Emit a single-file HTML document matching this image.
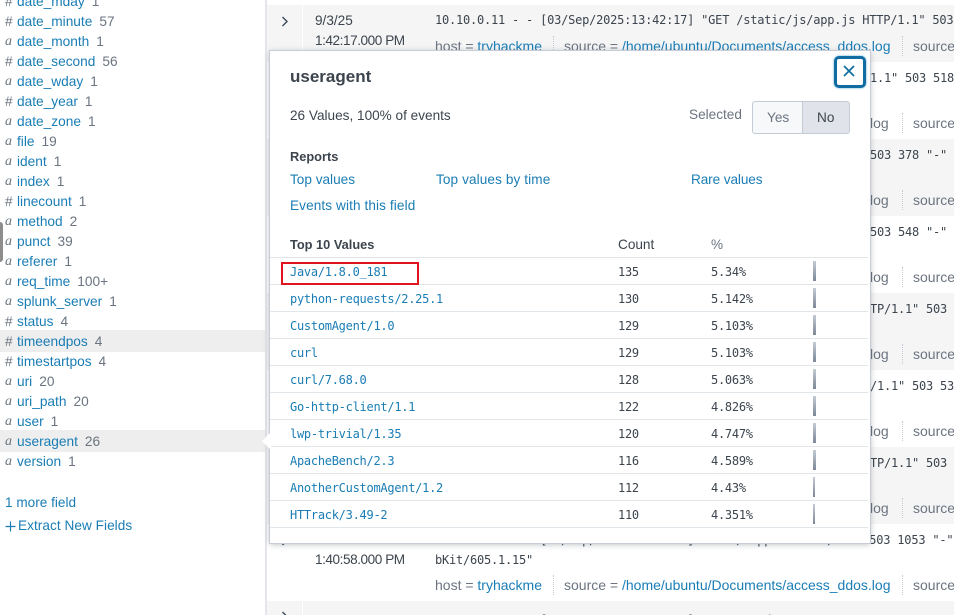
<!DOCTYPE html>
<html><head><meta charset="utf-8"><style>
html,body{margin:0;padding:0;width:954px;height:615px;overflow:hidden;background:#fff;font-family:"Liberation Sans",sans-serif;font-size:13.6px;color:#3c444d}
body{position:relative}
div,span,a{position:absolute;white-space:nowrap}
span.i,a.i,b.i{position:static}
.l{color:#1a7db5}
.c{color:#6b7480}
.f{height:20px;line-height:20px;left:0;width:265px}
.f .t{left:5px;color:#6b7480;width:10px}
.f .a{font-family:"Liberation Serif",serif;font-style:italic;font-size:14px}
.f .n{left:17px;color:#1a7db5;font-size:13.7px}
.f .n i{font-style:normal;color:#6b7480;margin-left:7px}
.st{left:267px;width:687px;background:#f5f5f6}
.m{font-family:"DejaVu Sans Mono","Liberation Mono",monospace;font-size:12px;letter-spacing:-.22px;color:#3c444d;height:20px;line-height:20px}
.s{font-size:14px;height:20px;line-height:20px;color:#6b7480}
.dot{width:0;height:20px;border-left:1px dotted #c3cbd4}
.row{left:0;width:598px;height:1px;background:#e1e6eb}
.v{left:20px;font-family:"DejaVu Sans Mono",monospace;font-size:12px;letter-spacing:-.27px;color:#1a7db5;height:20px;line-height:20px}
.cn{left:348px;font-family:"DejaVu Sans Mono",monospace;font-size:12px;letter-spacing:-.27px;color:#3c444d;height:20px;line-height:20px}
.p{left:441px;font-family:"DejaVu Sans Mono",monospace;font-size:12px;letter-spacing:-.27px;color:#3c444d;height:20px;line-height:20px}
.b{left:543px;width:3px;height:20px;background:linear-gradient(#c3cbd4,#7d8797)}
</style></head><body>

<!-- sidebar -->
<div style="left:0;top:330px;width:265px;height:22px;background:#eeeeee"></div>
<div style="left:0;top:430px;width:265px;height:22px;background:#eeeeee"></div>
<div style="left:0;top:222px;width:3px;height:40px;background:#8d8d8d;border-radius:0 3px 3px 0"></div>
<div style="left:265px;top:0;width:2px;height:615px;background:#e4e6ec"></div>

<div class="f" style="top:-8px"><div class="t">#</div><div class="n">date_mday<i>1</i></div></div>
<div class="f" style="top:12px"><div class="t">#</div><div class="n">date_minute<i>57</i></div></div>
<div class="f" style="top:32px"><div class="t a">a</div><div class="n">date_month<i>1</i></div></div>
<div class="f" style="top:52px"><div class="t">#</div><div class="n">date_second<i>56</i></div></div>
<div class="f" style="top:72px"><div class="t a">a</div><div class="n">date_wday<i>1</i></div></div>
<div class="f" style="top:92px"><div class="t">#</div><div class="n">date_year<i>1</i></div></div>
<div class="f" style="top:112px"><div class="t a">a</div><div class="n">date_zone<i>1</i></div></div>
<div class="f" style="top:132px"><div class="t a">a</div><div class="n">file<i>19</i></div></div>
<div class="f" style="top:152px"><div class="t a">a</div><div class="n">ident<i>1</i></div></div>
<div class="f" style="top:172px"><div class="t a">a</div><div class="n">index<i>1</i></div></div>
<div class="f" style="top:192px"><div class="t">#</div><div class="n">linecount<i>1</i></div></div>
<div class="f" style="top:212px"><div class="t a">a</div><div class="n">method<i>2</i></div></div>
<div class="f" style="top:232px"><div class="t a">a</div><div class="n">punct<i>39</i></div></div>
<div class="f" style="top:252px"><div class="t a">a</div><div class="n">referer<i>1</i></div></div>
<div class="f" style="top:272px"><div class="t a">a</div><div class="n">req_time<i>100+</i></div></div>
<div class="f" style="top:292px"><div class="t a">a</div><div class="n">splunk_server<i>1</i></div></div>
<div class="f" style="top:312px"><div class="t">#</div><div class="n">status<i>4</i></div></div>
<div class="f" style="top:332px"><div class="t">#</div><div class="n">timeendpos<i>4</i></div></div>
<div class="f" style="top:352px"><div class="t">#</div><div class="n">timestartpos<i>4</i></div></div>
<div class="f" style="top:372px"><div class="t a">a</div><div class="n">uri<i>20</i></div></div>
<div class="f" style="top:392px"><div class="t a">a</div><div class="n">uri_path<i>20</i></div></div>
<div class="f" style="top:412px"><div class="t a">a</div><div class="n">user<i>1</i></div></div>
<div class="f" style="top:432px"><div class="t a">a</div><div class="n">useragent<i>26</i></div></div>
<div class="f" style="top:452px"><div class="t a">a</div><div class="n">version<i>1</i></div></div>
<div class="l" style="left:5px;top:493px;height:20px;line-height:20px">1 more field</div>
<svg style="position:absolute;left:5px;top:521px" width="11" height="11"><path d="M5.5 .5 V10.5 M.5 5.5 H10.5" stroke="#1a7db5" stroke-width="1.2" fill="none"/></svg>
<div class="l" style="left:18px;top:516px;height:20px;line-height:20px;letter-spacing:.05px">Extract New Fields</div>

<!-- event stripes -->
<div class="st" style="top:5px;height:57px"></div>
<div class="st" style="top:139px;height:77px"></div>
<div class="st" style="top:293px;height:77px"></div>
<div class="st" style="top:447px;height:77px"></div>
<div class="st" style="top:601px;height:14px"></div>
<div style="left:302px;top:5px;width:1px;height:57px;background:#fff"></div>
<div style="left:302px;top:601px;width:1px;height:14px;background:#fff"></div>

<!-- first event -->
<svg style="position:absolute;left:281px;top:16px" width="8" height="11"><path d="M1.5 1 L6 5.5 L1.5 10" fill="none" stroke="#3c4a5a" stroke-width="1.4"/></svg>
<div style="left:315px;top:11px;height:20px;line-height:20px">9/3/25</div>
<div style="left:315px;top:31px;height:20px;line-height:20px;letter-spacing:-.45px">1:42:17.000 PM</div>
<div class="m" style="left:435px;top:10px">10.10.0.11 - - [03/Sep/2025:13:42:17] "GET /static/js/app.js HTTP/1.1" 503</div>
<div class="s" style="left:435px;top:36px">host = <span class="i l">tryhackme</span></div>
<div class="dot" style="left:553px;top:36px"></div>
<div class="s" style="left:564px;top:36px">source = <span class="i l">/home/ubuntu/Documents/access_ddos.log</span></div>
<div class="dot" style="left:902px;top:36px"></div>
<div class="s" style="left:913px;top:36px">source</div>

<!-- right edge snippets -->
<div class="m" style="left:870px;top:68px">1.1" 503 518</div>
<div class="m" style="left:870px;top:145px">503 378 "-"</div>
<div class="m" style="left:870px;top:222px">503 548 "-"</div>
<div class="m" style="left:870px;top:299px">TP/1.1" 503</div>
<div class="m" style="left:870px;top:376px">/1.1" 503 53</div>
<div class="m" style="left:870px;top:453px">TP/1.1" 503</div>

<div class="s l" style="left:870px;top:113px">log</div><div class="dot" style="left:902px;top:113px"></div><div class="s" style="left:913px;top:113px">source</div>
<div class="s l" style="left:870px;top:190px">log</div><div class="dot" style="left:902px;top:190px"></div><div class="s" style="left:913px;top:190px">source</div>
<div class="s l" style="left:870px;top:267px">log</div><div class="dot" style="left:902px;top:267px"></div><div class="s" style="left:913px;top:267px">source</div>
<div class="s l" style="left:870px;top:344px">log</div><div class="dot" style="left:902px;top:344px"></div><div class="s" style="left:913px;top:344px">source</div>
<div class="s l" style="left:870px;top:421px">log</div><div class="dot" style="left:902px;top:421px"></div><div class="s" style="left:913px;top:421px">source</div>
<div class="s l" style="left:870px;top:498px">log</div><div class="dot" style="left:902px;top:498px"></div><div class="s" style="left:913px;top:498px">source</div>

<!-- event under modal bottom -->
<svg style="position:absolute;left:281px;top:535px" width="8" height="11"><path d="M1.5 1 L6 5.5 L1.5 10" fill="none" stroke="#3c4a5a" stroke-width="1.4"/></svg>
<div style="left:315px;top:530px;height:20px;line-height:20px">9/3/25</div>
<div style="left:315px;top:550px;height:20px;line-height:20px;letter-spacing:-.45px">1:40:58.000 PM</div>
<div class="m" style="left:435px;top:530px">10.10.0.13 - - [03/Sep/2025:13:40:58] "GET /support HTTP/1.1" 503 1053 "-"</div>
<div class="m" style="left:435px;top:550px">bKit/605.1.15"</div>
<div class="s" style="left:435px;top:575px">host = <span class="i l">tryhackme</span></div>
<div class="dot" style="left:553px;top:575px"></div>
<div class="s" style="left:564px;top:575px">source = <span class="i l">/home/ubuntu/Documents/access_ddos.log</span></div>
<div class="dot" style="left:902px;top:575px"></div>
<div class="s" style="left:913px;top:575px">source</div>

<!-- last event -->
<svg style="position:absolute;left:281px;top:611px" width="8" height="11"><path d="M1.5 1 L6 5.5 L1.5 10" fill="none" stroke="#3c4a5a" stroke-width="1.4"/></svg>
<div style="left:315px;top:611px;height:20px;line-height:20px">9/3/25</div>
<div class="m" style="left:435px;top:610px">10.10.0.26 - - [03/Sep/2025:13:40:47] "GET /product/1234 HTTP/1.1" 503 200</div>

<!-- modal -->
<div style="left:270px;top:51px;width:600px;height:492px;background:#fff;box-shadow:0 0 0 1px #c8ccd6,0 1px 6px rgba(60,68,77,.4)">
  <div style="left:20px;top:16px;font-size:17px;line-height:20px;font-weight:bold;color:#3c444d">useragent</div>
  <div style="left:20px;top:55px;line-height:20px">26 Values, 100% of events</div>
  <div class="c" style="left:419px;top:54px;line-height:20px">Selected</div>
  <div style="left:482px;top:50px;width:96px;height:31px;border:1px solid #c3cbd4;border-radius:3px;background:#f7f8fa;overflow:hidden">
    <div style="left:49px;top:0;width:47px;height:31px;background:#e1e3ea;border-left:1px solid #c3cbd4"></div>
    <div class="c" style="left:14px;top:6px;line-height:20px">Yes</div>
    <div style="left:64px;top:6px;line-height:20px">No</div>
  </div>
  <div style="left:564px;top:5px;width:26px;height:26px;border:3px solid #0f6da3;border-radius:5px;background:#fff;box-shadow:0 0 2px #5aa7d0"></div>
  <svg style="position:absolute;left:571px;top:12px" width="16" height="16"><path d="M3 3 L13 13 M13 3 L3 13" stroke="#0f6da3" stroke-width="1.7" fill="none"/></svg>

  <div style="left:20px;top:96px;line-height:20px;font-weight:bold;font-size:12.8px">Reports</div>
  <div class="l" style="left:20px;top:119px;line-height:20px">Top values</div>
  <div class="l" style="left:166px;top:119px;line-height:20px;letter-spacing:.1px">Top values by time</div>
  <div class="l" style="left:421px;top:119px;line-height:20px;letter-spacing:-.1px">Rare values</div>
  <div class="l" style="left:20px;top:145px;line-height:20px;letter-spacing:.1px">Events with this field</div>

  <div style="left:20px;top:184px;line-height:20px;font-weight:bold;font-size:12.8px">Top 10 Values</div>
  <div style="left:348px;top:184px;line-height:20px">Count</div>
  <div class="c" style="left:441px;top:184px;line-height:20px">%</div>

  <div class="row" style="top:206px"></div>
  <div class="row" style="top:233px"></div>
  <div class="row" style="top:260px"></div>
  <div class="row" style="top:287px"></div>
  <div class="row" style="top:314px"></div>
  <div class="row" style="top:341px"></div>
  <div class="row" style="top:368px"></div>
  <div class="row" style="top:395px"></div>
  <div class="row" style="top:422px"></div>
  <div class="row" style="top:449px"></div>
  <div class="row" style="top:476px"></div>

  <div style="left:11px;top:211px;width:134px;height:19px;border:2px solid #e0141e"></div>

  <div class="v" style="top:211px">Java/1.8.0_181</div><div class="cn" style="top:211px">135</div><div class="p" style="top:211px">5.34%</div><div class="b" style="top:210px"></div>
  <div class="v" style="top:238px">python-requests/2.25.1</div><div class="cn" style="top:238px">130</div><div class="p" style="top:238px">5.142%</div><div class="b" style="top:237px"></div>
  <div class="v" style="top:265px">CustomAgent/1.0</div><div class="cn" style="top:265px">129</div><div class="p" style="top:265px">5.103%</div><div class="b" style="top:264px"></div>
  <div class="v" style="top:292px">curl</div><div class="cn" style="top:292px">129</div><div class="p" style="top:292px">5.103%</div><div class="b" style="top:291px"></div>
  <div class="v" style="top:319px">curl/7.68.0</div><div class="cn" style="top:319px">128</div><div class="p" style="top:319px">5.063%</div><div class="b" style="top:318px"></div>
  <div class="v" style="top:346px">Go-http-client/1.1</div><div class="cn" style="top:346px">122</div><div class="p" style="top:346px">4.826%</div><div class="b" style="top:345px"></div>
  <div class="v" style="top:373px">lwp-trivial/1.35</div><div class="cn" style="top:373px">120</div><div class="p" style="top:373px">4.747%</div><div class="b" style="top:372px"></div>
  <div class="v" style="top:400px">ApacheBench/2.3</div><div class="cn" style="top:400px">116</div><div class="p" style="top:400px">4.589%</div><div class="b" style="top:399px"></div>
  <div class="v" style="top:427px">AnotherCustomAgent/1.2</div><div class="cn" style="top:427px">112</div><div class="p" style="top:427px">4.43%</div><div class="b" style="top:426px;width:2px"></div>
  <div class="v" style="top:454px">HTTrack/3.49-2</div><div class="cn" style="top:454px">110</div><div class="p" style="top:454px">4.351%</div><div class="b" style="top:453px;width:2px"></div>
</div>
<svg style="position:absolute;left:262px;top:432px" width="9" height="18"><path d="M9 0 L0 9 L9 18 Z" fill="#fff"/></svg>
</body></html>
